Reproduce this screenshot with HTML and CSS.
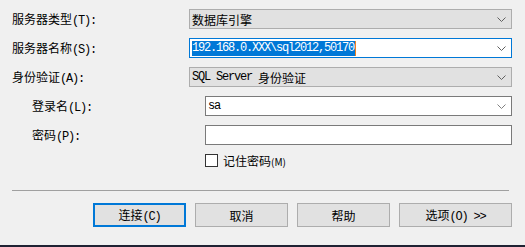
FILE: index.html
```html
<!DOCTYPE html>
<html lang="zh-CN">
<head>
    <meta charset="UTF-8">
    <title>连接到服务器</title>
    <link rel="stylesheet" href="styles.css">
</head>
<body>
    <div class="dialog">
        <div class="row">
            <label class="lbl">服务器类型<span class="m">(T):</span></label>
            <div class="field">
                <span class="val">数据库引擎</span>
                <svg class="arrow" width="9" height="5" viewBox="0 0 9 5"><path d="M0.5 0.5 L4.5 4.5 L8.5 0.5" fill="none" stroke="#606060"/></svg>
            </div>
        </div>

        <div class="row">
            <label class="lbl">服务器名称<span class="m">(S):</span></label>
            <div class="field edit">
                <span class="val"><span class="sel m">192.168.0.XXX\sql2012,50170</span><span class="caret"></span></span>
                <svg class="arrow" width="9" height="5" viewBox="0 0 9 5"><path d="M0.5 0.5 L4.5 4.5 L8.5 0.5" fill="none" stroke="#606060"/></svg>
            </div>
        </div>

        <div class="row">
            <label class="lbl">身份验证<span class="m">(A):</span></label>
            <div class="field">
                <span class="val"><span class="m">SQL Server </span>身份验证</span>
                <svg class="arrow" width="9" height="5" viewBox="0 0 9 5"><path d="M0.5 0.5 L4.5 4.5 L8.5 0.5" fill="none" stroke="#606060"/></svg>
            </div>
        </div>

        <div class="row sub">
            <label class="lbl">登录名<span class="m">(L):</span></label>
            <div class="field white">
                <span class="val"><span class="m">sa</span></span>
                <svg class="arrow" width="9" height="5" viewBox="0 0 9 5"><path d="M0.5 0.5 L4.5 4.5 L8.5 0.5" fill="none" stroke="#808080"/></svg>
            </div>
        </div>

        <div class="row sub">
            <label class="lbl">密码<span class="m">(P):</span></label>
            <div class="field white"></div>
        </div>

        <div class="check">
            <span class="box"></span>
            <span>记住密码<span class="small">(M)</span></span>
        </div>

        <div class="sep"></div>

        <div class="btns">
            <button class="btn default">连接<span class="m">(C)</span></button>
            <button class="btn">取消</button>
            <button class="btn">帮助</button>
            <button class="btn wide">选项<span class="m">(O) &gt;&gt;</span></button>
        </div>
    </div>
</body>
</html>
```

FILE: styles.css
```css
* {
    box-sizing: border-box;
}

html, body {
    margin: 0;
    padding: 0;
}

body {
    width: 525px;
    height: 247px;
    background: #f0f0f0;
    border-bottom: 2px solid #1f2233;
    font-family: "Noto Sans CJK SC", sans-serif;
    font-size: 12px;
    color: #000;
    overflow: hidden;
}

.dialog {
    padding: 9px 13px 0 12px;
}

/* half-width latin, like the dialog's bitmap font */
.m {
    font-family: "Liberation Mono", "DejaVu Sans Mono", monospace;
    font-size: 12px;
    letter-spacing: -1.2px;
}

.row {
    display: flex;
    align-items: center;
    height: 20px;
    margin-bottom: 9px;
}

.lbl {
    width: 177px;
    flex: none;
}

.row.sub {
    padding-left: 20px;
}

.row.sub .lbl {
    width: 173px;
}

.field {
    flex: 1;
    height: 20px;
    display: flex;
    align-items: center;
    padding: 0 5px 0 2px;
    border: 1px solid #adadad;
    background: #e1e1e1;
    white-space: pre;
}

.field .val {
    flex: 1;
    display: flex;
    align-items: center;
}

.field.edit {
    background: #fff;
    border-color: #0078d7;
}

.field.white {
    background: #fff;
    border-color: #7a7a7a;
}

.sel {
    background: #0078d7;
    color: #fff;
    line-height: 15px;
    padding-right: 1px;
}

.caret {
    display: inline-block;
    width: 1px;
    height: 15px;
    background: #f0821e;
}

.check {
    display: flex;
    align-items: center;
    height: 13px;
    margin: 4px 0 0 193px;
    gap: 5px;
}

.box {
    width: 13px;
    height: 13px;
    border: 1px solid #333;
    background: #fff;
}

.small {
    font-size: 10px;
}

.sep {
    height: 1px;
    background: #a0a0a0;
    margin: 23px 3px 0 0;
}

.btns {
    display: flex;
    justify-content: flex-end;
    gap: 9px;
    margin-top: 12px;
}

.btn {
    width: 93px;
    height: 24px;
    padding: 0;
    border: 1px solid #adadad;
    background: #e1e1e1;
    font-family: "Noto Sans CJK SC", sans-serif;
    font-size: 12px;
    color: #000;
}

.btn.default {
    border: 2px solid #0078d7;
}

.btn.wide {
    width: 113px;
}
```
